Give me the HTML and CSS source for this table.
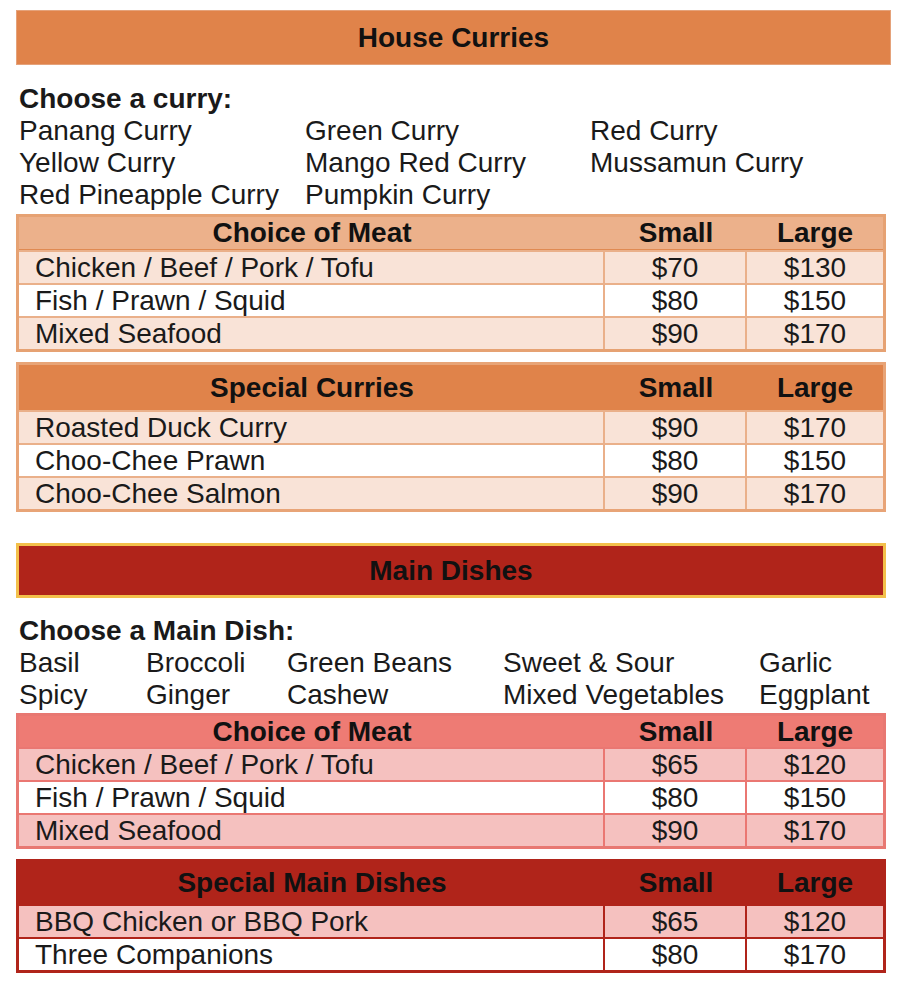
FILE: index.html
```html
<!DOCTYPE html>
<html>
<head>
<meta charset="utf-8">
<link rel="stylesheet" href="styles.css">
</head>
<body>
<div class="menu">
  <div class="bar bar-orange">House Curries</div>
  <div class="choose">Choose a curry:</div>
  <div class="options curry-opts">
    <span>Panang Curry</span><span>Green Curry</span><span>Red Curry</span>
    <span>Yellow Curry</span><span>Mango Red Curry</span><span>Mussamun Curry</span>
    <span>Red Pineapple Curry</span><span>Pumpkin Curry</span><span></span>
  </div>
  <div class="tbl t-orange-light t1">
    <div class="row head"><div class="c">Choice of Meat</div><div class="c">Small</div><div class="c">Large</div></div>
    <div class="row odd"><div class="c name">Chicken / Beef / Pork / Tofu</div><div class="c">$70</div><div class="c">$130</div></div>
    <div class="row"><div class="c name">Fish / Prawn / Squid</div><div class="c">$80</div><div class="c">$150</div></div>
    <div class="row odd"><div class="c name">Mixed Seafood</div><div class="c">$90</div><div class="c">$170</div></div>
  </div>
  <div class="tbl t-orange t2">
    <div class="row head"><div class="c">Special Curries</div><div class="c">Small</div><div class="c">Large</div></div>
    <div class="row odd"><div class="c name">Roasted Duck Curry</div><div class="c">$90</div><div class="c">$170</div></div>
    <div class="row"><div class="c name">Choo-Chee Prawn</div><div class="c">$80</div><div class="c">$150</div></div>
    <div class="row odd"><div class="c name">Choo-Chee Salmon</div><div class="c">$90</div><div class="c">$170</div></div>
  </div>

  <div class="bar bar-red">Main Dishes</div>
  <div class="choose choose-main">Choose a Main Dish:</div>
  <div class="options main-opts">
    <span>Basil</span><span>Broccoli</span><span>Green Beans</span><span>Sweet &amp; Sour</span><span>Garlic</span>
    <span>Spicy</span><span>Ginger</span><span>Cashew</span><span>Mixed Vegetables</span><span>Eggplant</span>
  </div>
  <div class="tbl t-pink t3">
    <div class="row head"><div class="c">Choice of Meat</div><div class="c">Small</div><div class="c">Large</div></div>
    <div class="row odd"><div class="c name">Chicken / Beef / Pork / Tofu</div><div class="c">$65</div><div class="c">$120</div></div>
    <div class="row"><div class="c name">Fish / Prawn / Squid</div><div class="c">$80</div><div class="c">$150</div></div>
    <div class="row odd"><div class="c name">Mixed Seafood</div><div class="c">$90</div><div class="c">$170</div></div>
  </div>
  <div class="tbl t-red t4">
    <div class="row head"><div class="c">Special Main Dishes</div><div class="c">Small</div><div class="c">Large</div></div>
    <div class="row odd"><div class="c name">BBQ Chicken or BBQ Pork</div><div class="c">$65</div><div class="c">$120</div></div>
    <div class="row"><div class="c name">Three Companions</div><div class="c">$80</div><div class="c">$170</div></div>
  </div>
</div>
</body>
</html>
```

FILE: styles.css
```css
* { box-sizing: border-box; }
html, body { margin: 0; padding: 0; background: #ffffff; }
body {
  font-family: "Liberation Sans", Arial, sans-serif;
  font-size: 28px;
  color: #1a1a1a;
}
.menu {
  padding: 10px 0 0 16px;
  width: 892px;
  display: flex;
  flex-direction: column;
}
.bar {
  width: 875px;
  height: 55px;
  display: flex;
  align-items: center;
  justify-content: center;
  font-weight: bold;
  color: #111;
}
.bar-orange {
  background: #e0834a;
  border: 1px solid #e5a27a;
}
.bar-red {
  background: #b0241a;
  border: 3px solid #f3c04b;
  height: 55px;
  margin-top: 31px;
  width: 870px;
}
.choose {
  font-weight: bold;
  line-height: 32px;
  margin-top: 18px;
  padding-left: 3px;
}
.choose-main { margin-top: 17px; }
.options {
  display: grid;
  line-height: 32px;
  padding-left: 3px;
}
.curry-opts { grid-template-columns: 286px 285px 1fr; }
.main-opts { grid-template-columns: 127px 141px 216px 256px 1fr; }

.tbl {
  width: 870px;
  border: 3px solid;
  display: flex;
  flex-direction: column;
}
.row {
  display: grid;
  grid-template-columns: 586px 142px 1fr;
  height: 33px;
  background: #fff;
  border-top: 2px solid;
  border-color: inherit;
}
.row.head { border-top: none; font-weight: bold; color: #111; }
.c {
  display: flex;
  align-items: center;
  justify-content: center;
  border-right: 2px solid;
  border-color: inherit;
  line-height: 1;
}
.c:last-child { border-right: none; }
.c.name { justify-content: flex-start; padding-left: 16px; }
.row.head .c { border-right: none; }

.t1 { margin-top: 3px; border-color: #e6a273; }
.t1 .row.head { background: #ecb18b; height: 33px; border-bottom: 1px solid #e08a52; }
.t1 .row.odd { background: #f9e3d7; }
.t1 .row { border-color: #eab08a; }

.t2 { margin-top: 10px; border-color: #e8a477; }
.t2 .row.head { background: #e0834a; height: 45px; border: none; }
.t2 .row.odd { background: #f9e3d7; }
.t2 .row { border-color: #eab08a; }

.t3 { margin-top: 2px; border-color: #e87872; }
.t3 .row.head { background: #ee7b74; height: 31px; }
.t3 .row.odd { background: #f5c1bf; }
.t3 .row { border-color: #ea7772; }

.t4 { margin-top: 10px; border-color: #b0241a; }
.t4 .row.head { background: #b0241a; height: 42px; }
.t4 .row.odd { background: #f5c1bf; }
.t4 .row { border-color: #b0241a; }
```
